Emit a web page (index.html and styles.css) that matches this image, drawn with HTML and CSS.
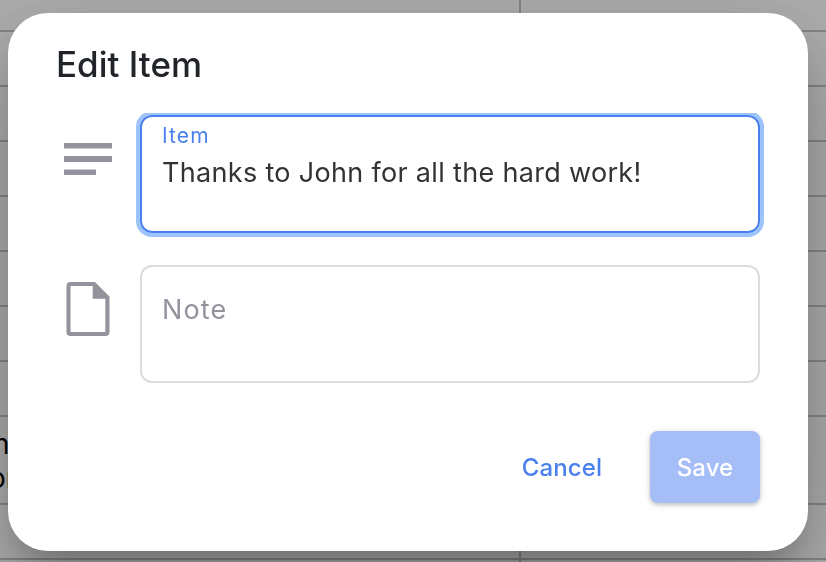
FILE: index.html
```
<!DOCTYPE html>
<html lang="en">
<head>
  <meta charset="utf-8">
  <title>Edit Item</title>
  <link rel="stylesheet" href="styles.css">
</head>
<body>

  <div class="sheet">
    <div class="row first"><div class="cell"></div></div>
    <div class="row"><div class="cell"></div></div>
    <div class="row"><div class="cell"></div></div>
    <div class="row"><div class="cell"></div></div>
    <div class="row"><div class="cell"></div></div>
    <div class="row"><div class="cell"></div></div>
    <div class="row"><div class="cell"></div></div>
    <div class="row"><div class="cell"></div></div>
    <div class="row tall"><div class="cell"><div class="entry">n</div><div class="entry second">or</div></div></div>
    <div class="row"><div class="cell"></div></div>
    <div class="row"><div class="cell"></div></div>
  </div>

  <div class="scrim">
    <form class="dialog">
      <h2 class="title">Edit Item</h2>
      <div class="line">
        <svg class="icon" viewBox="0 0 64 64">
          <path d="M8 8h48v5.500H8zM8 21h48v6H8zM8 34.500h32V40H8z"/>
        </svg>
        <div class="field focused">
          <label class="label" for="item">Item</label>
          <textarea class="input" id="item">Thanks to John for all the hard work!</textarea>
        </div>
      </div>
      <div class="line">
        <svg class="icon" viewBox="0 0 64 64">
          <path fill-rule="evenodd" d="M14.500 -3H39L53.500 11.500V47Q53.500 51 49.500 51H14.500Q10.500 51 10.500 47V1Q10.500 -3 14.500 -3zM14.500 1V47H49.300V13.700H36.700V1z"/>
        </svg>
        <div class="field">
          <textarea class="input" placeholder="Note"></textarea>
        </div>
      </div>
      <div class="actions">
        <button class="cancel" type="button">Cancel</button>
        <button class="save" type="submit" disabled>Save</button>
      </div>
    </form>
  </div>

</body>
</html>
```

FILE: styles.css
```
body {
  margin: 0;
  height: 562px;
  overflow: hidden;
  font-family: Inter, "Liberation Sans", sans-serif;
}

.sheet {
  height: 562px;
  overflow: hidden;
}

.row {
  box-sizing: border-box;
  height: 55px;
  border-bottom: 2px solid #c4c4c4;
}

.row.first {
  height: 32px;
}

.row.tall {
  height: 88px;
}

.cell {
  box-sizing: border-box;
  width: 521px;
  height: 100%;
  border-right: 2px solid #c4c4c4;
}

.tall .cell {
  padding-top: 10px;
  font-size: 28px;
  line-height: 34px;
}

/* the end of a wrapped entry, the rest runs off to the left */
.entry {
  margin-left: -7px;
}

.entry.second {
  margin-left: -11px;
}

.scrim {
  position: fixed;
  inset: 0;
  display: flex;
  align-items: flex-start;
  padding: 13px 18px 0 8px;
  background: rgba(0,0,0,0.32);
}

.dialog {
  box-sizing: border-box;
  width: 800px;
  height: 538px;
  padding: 31px 48px 48px;
  border-radius: 40px;
  background: white;
  box-shadow: 0 22px 30px -14px rgba(0,0,0,0.2),
              0 48px 76px 6px rgba(0,0,0,0.14),
              0 18px 92px 16px rgba(0,0,0,0.12);
}

.title {
  margin: 0 0 31px;
  font-size: 35px;
  font-weight: 500;
  line-height: 40px;
  color: #212529;
}

.line {
  display: flex;
  gap: 20px;
  margin-bottom: 32px;
}

.icon {
  width: 64px;
  height: 64px;
  margin-top: 20px;
  overflow: visible;
  fill: #93939e;
}

.field {
  box-sizing: border-box;
  flex: 1;
  height: 118px;
  padding: 25px 20px;
  border: 2px solid #dcdcdc;
  border-radius: 12px;
}

.field.focused {
  padding: 6px 20px;
  border-color: #4a80ee;
  box-shadow: 0 0 0 4px #9cc4fb;
  /* the ring is cut short along the top edge */
  clip-path: inset(-2px -4px -4px -4px);
}

.label {
  display: block;
  font-size: 21px;
  line-height: 26px;
  letter-spacing: 1.1px;
  color: #4a80ee;
}

.input {
  display: block;
  width: 100%;
  height: 40px;
  margin: 0;
  padding: 0;
  border: 0;
  outline: none;
  resize: none;
  overflow: hidden;
  background: none;
  font-family: inherit;
  font-size: 27px;
  line-height: 36px;
  letter-spacing: 0.32px;
  color: #333;
}

.focused .input {
  margin-top: 6px;
}

.input::placeholder {
  color: #93939e;
  letter-spacing: 1.1px;
  opacity: 1;
}

.actions {
  display: flex;
  justify-content: flex-end;
  gap: 16px;
  margin-top: 48px;
}

.cancel, .save {
  height: 72px;
  padding: 0;
  border: 0;
  border-radius: 8px;
  background: none;
  font-family: inherit;
  font-size: 24px;
  font-weight: 500;
  letter-spacing: 0.1px;
}

.cancel {
  width: 144px;
  color: #4a80ee;
}

.save {
  width: 110px;
  background: #a6bef8;
  color: white;
  box-shadow: 0 2px 4px rgba(0,0,0,0.2), 0 1px 10px rgba(0,0,0,0.08);
}
```
